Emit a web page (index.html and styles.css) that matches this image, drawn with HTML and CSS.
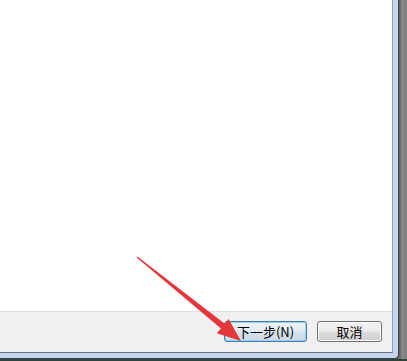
FILE: index.html
```html
<!DOCTYPE html>
<html>
<head>
<meta charset="utf-8">
<link rel="stylesheet" href="styles.css">
</head>
<body>
<div class="screen">
  <div class="window">
    <div class="client">
      <div class="content"></div>
      <div class="bar">
        <button class="btn btn-default">下一步(N)</button>
        <button class="btn">取消</button>
      </div>
    </div>
  </div>
  <div class="desk"></div>
  <svg class="arrow" width="407" height="361" viewBox="0 0 407 361">
    <polygon points="137.4,256.5 224.8,323.8 228.6,319.0 241,341 216.8,333.3 221.0,328.5 136.6,257.5" fill="#e5373b"/>
  </svg>
</div>
</body>
</html>
```
FILE: styles.css
```css
html, body {
  margin: 0;
  padding: 0;
}
.screen {
  position: relative;
  width: 407px;
  height: 361px;
  display: flex;
  align-items: flex-start;
  background: linear-gradient(to bottom, #7a7a7a 0, #7a7a7a 358px, #30443a 359px, #30443a 100%);
  overflow: hidden;
}
.window {
  width: 393px;
  padding: 0 5px 5px 0;
  background: #c3d6ec;
  border-right: 1px solid #3d4249;
  border-bottom: 1px solid #3d4249;
  border-bottom-right-radius: 5px;
  flex: none;
}
.client {
  width: 392px;
  border-right: 1px solid #8da3bb;
  border-bottom: 1px solid #66727f;
  display: flex;
  flex-direction: column;
}
.content {
  height: 311px;
  background: #ffffff;
}
.bar {
  height: 41px;
  background: #f0f0f0;
  border-top: 1px solid #dfdfdf;
  display: flex;
  justify-content: flex-end;
  align-items: flex-start;
  gap: 10px;
  padding: 9px 10px 0 0;
  box-sizing: border-box;
}
.btn {
  height: 21px;
  width: 65px;
  margin: 0;
  padding: 0;
  border: 1px solid #707070;
  border-radius: 3px;
  background: linear-gradient(to bottom, #f3f3f3 0%, #ebebeb 48%, #dddddd 52%, #cfcfcf 100%);
  box-shadow: inset 0 0 0 1px #fbfbfb;
  font-family: "Noto Sans CJK SC", "Microsoft YaHei", sans-serif;
  font-size: 13px;
  line-height: 19px;
  color: #000;
  text-align: center;
}
.btn-default {
  width: 83px;
  border-color: #3c7fb1;
  background: linear-gradient(to bottom, #eef4f9 0%, #e3ecf3 48%, #d6e2ec 52%, #cbdae6 100%);
  box-shadow: inset 0 0 0 1px #9ccde9;
}
.desk {
  flex: 1;
  height: 359px;
  background: linear-gradient(to right, #5a5a5a, #8a8a8a 40%, #7d7d7d);
}
.arrow {
  position: absolute;
  left: 0;
  top: 0;
  pointer-events: none;
}
```
